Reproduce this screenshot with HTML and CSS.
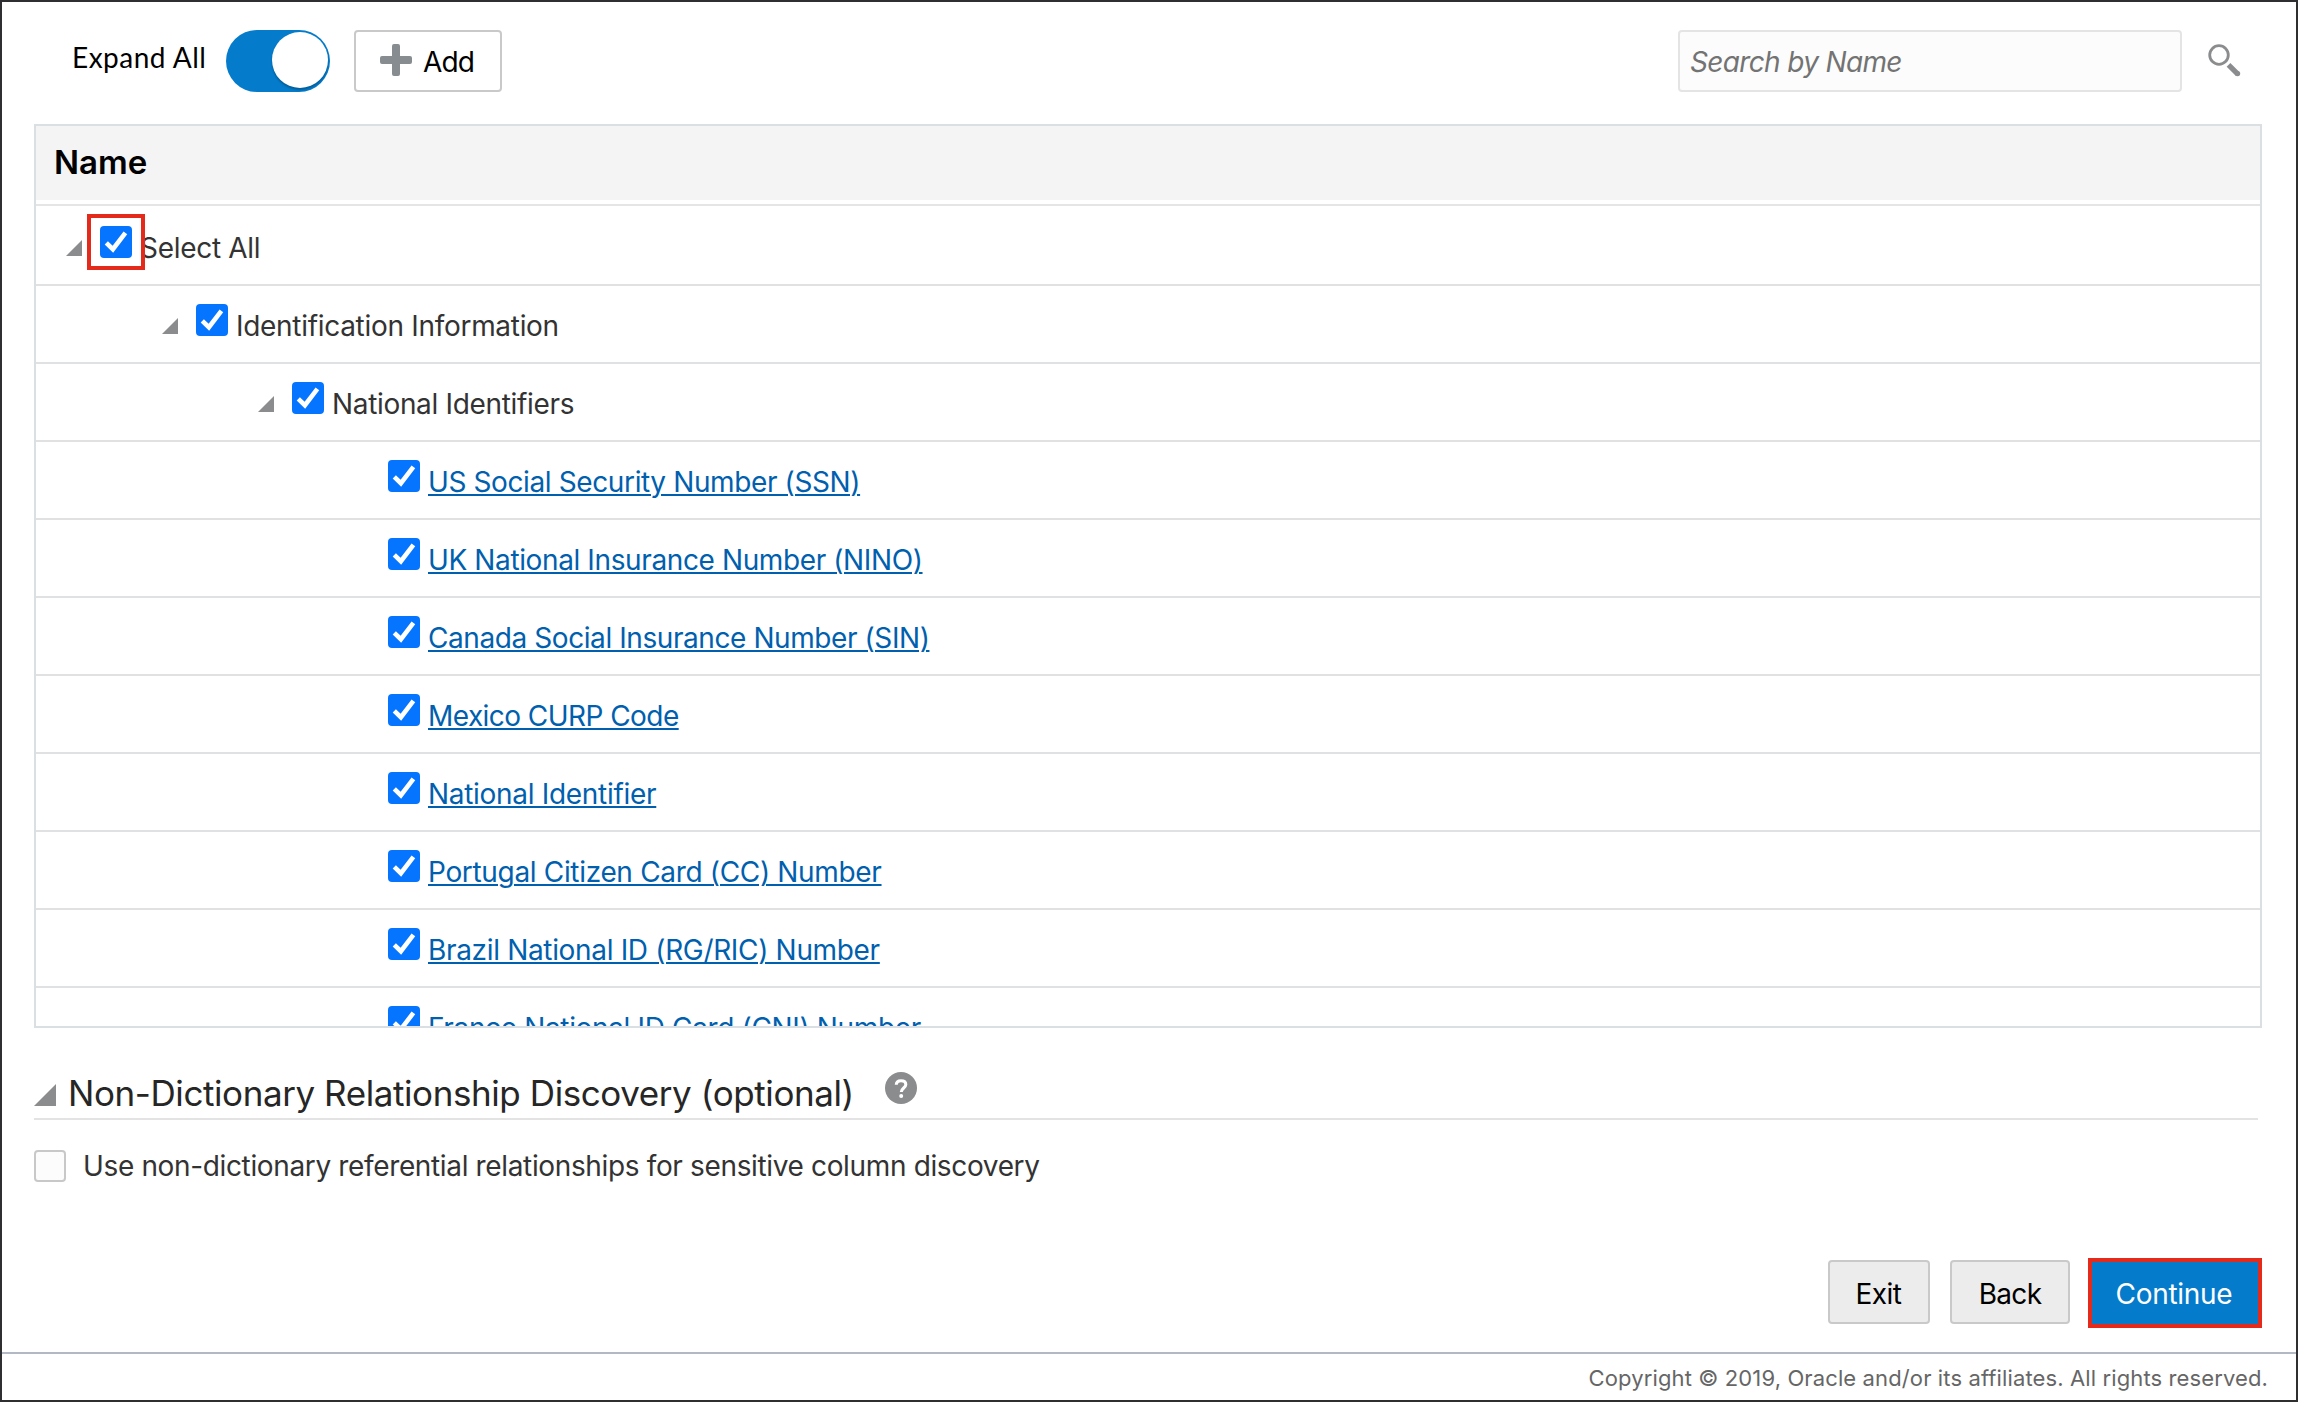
FILE: index.html
```
<!DOCTYPE html>
<html lang="en">
<head>
<meta charset="utf-8">
<title>Sensitive Categories</title>
<link rel="stylesheet" href="styles.css">
</head>
<body>
<svg width="0" height="0" class="defs" aria-hidden="true">
  <symbol id="tick" viewBox="0 0 32 32"><path d="M6.3 16.8 12.9 23.2 25.4 6.9" fill="none" stroke="#fff" stroke-width="4.6"/></symbol>
  <symbol id="open" viewBox="0 0 16 16"><path d="M0 16 16 0V16Z" fill="#8b8c8e"/></symbol>
</svg>
<div class="page">
  <header class="toolbar">
    <span class="expand-label">Expand All</span>
    <span class="toggle"><span class="knob"></span></span>
    <button class="btn add">
      <svg class="plus" viewBox="0 0 32 32"><path d="M14 0h4a2 2 0 0 1 2 2v10h10a2 2 0 0 1 2 2v4a2 2 0 0 1-2 2H20v10a2 2 0 0 1-2 2h-4a2 2 0 0 1-2-2V20H2a2 2 0 0 1-2-2v-4a2 2 0 0 1 2-2h10V2a2 2 0 0 1 2-2Z" fill="#878c90"/></svg>
      <span>Add</span>
    </button>
    <div class="search">Search by Name</div>
    <svg class="lens" viewBox="0 0 34 34"><circle cx="11" cy="11" r="9.3" fill="none" stroke="#8b8c8e" stroke-width="2.8"/><path d="M20.5 20.8 29.8 30.1" stroke="#8b8c8e" stroke-width="5.2"/><circle cx="29.6" cy="29.6" r="2.6" fill="#8b8c8e"/></svg>
  </header>

  <section class="tree">
    <h2 class="tree-head">Name</h2>
    <div class="row root"><svg class="arrow"><use href="#open"/></svg><span class="check marked"><svg><use href="#tick"/></svg></span><span class="text t0">Select All</span></div>
    <div class="row l1"><svg class="arrow"><use href="#open"/></svg><span class="check"><svg><use href="#tick"/></svg></span><span class="text t1">Identification Information</span></div>
    <div class="row l2"><svg class="arrow"><use href="#open"/></svg><span class="check"><svg><use href="#tick"/></svg></span><span class="text t2">National Identifiers</span></div>
    <div class="row leaf"><span class="check"><svg><use href="#tick"/></svg></span><a class="text link t4">US Social Security Number (SSN)</a></div>
    <div class="row leaf"><span class="check"><svg><use href="#tick"/></svg></span><a class="text link t4">UK National Insurance Number (NINO)</a></div>
    <div class="row leaf"><span class="check"><svg><use href="#tick"/></svg></span><a class="text link t5">Canada Social Insurance Number (SIN)</a></div>
    <div class="row leaf"><span class="check"><svg><use href="#tick"/></svg></span><a class="text link t6">Mexico CURP Code</a></div>
    <div class="row leaf"><span class="check"><svg><use href="#tick"/></svg></span><a class="text link t1">National Identifier</a></div>
    <div class="row leaf"><span class="check"><svg><use href="#tick"/></svg></span><a class="text link t2">Portugal Citizen Card (CC) Number</a></div>
    <div class="row leaf"><span class="check"><svg><use href="#tick"/></svg></span><a class="text link t2">Brazil National ID (RG/RIC) Number</a></div>
    <div class="row leaf"><span class="check"><svg><use href="#tick"/></svg></span><a class="text link">France National ID Card (CNI) Number</a></div>
  </section>

  <section class="discovery">
    <div class="heading">
      <svg class="big-arrow" viewBox="0 0 16 16" preserveAspectRatio="none"><path d="M0 16 16 0V16Z" fill="#8b8c8e"/></svg>
      <h3>Non-Dictionary Relationship Discovery (optional)</h3>
      <svg class="help" viewBox="0 0 32 32"><circle cx="16" cy="16" r="16" fill="#8b8c8e"/><path d="M11.3 12.8C11.3 9.9 13.2 8.7 16 8.7s4.8 1.4 4.8 3.9c0 3.4-4.5 3.4-4.5 7.4" fill="none" stroke="#fff" stroke-width="3.1"/><circle cx="16.2" cy="23.9" r="2" fill="#fff"/></svg>
    </div>
    <label class="option"><span class="box"></span><span class="text">Use non-dictionary referential relationships for sensitive column discovery</span></label>
  </section>

  <div class="actions">
    <button class="btn exit">Exit</button>
    <button class="btn back">Back</button>
    <button class="continue">Continue</button>
  </div>
  <footer class="footer">Copyright © 2019, Oracle and/or its affiliates. All rights reserved.</footer>
</div>
</body>
</html>
```
FILE: styles.css
```
* { box-sizing: border-box; }
body { margin: 0; background: #fff; }
.defs { position: absolute; }
.page {
  width: 2298px; height: 1402px; border: 2px solid #2f2f31;
  display: flex; flex-direction: column; background: #fff;
  font-family: Inter, "Liberation Sans", sans-serif; font-size: 28px; color: #333;
}
button { font: inherit; margin: 0; padding: 0; color: #000; }

.toolbar { display: flex; height: 62px; margin: 28px 54px 32px 70px; flex: none; }
.expand-label {
  width: 154px; line-height: 54px; letter-spacing: .5px; color: #000;
  font-family: Lato, sans-serif; white-space: nowrap;
}
.toggle {
  width: 104px; height: 62px; border-radius: 31px; background: #047bcb;
  padding: 2px; display: flex; justify-content: flex-end;
}
.knob { width: 56px; height: 56px; border-radius: 50%; background: #fff; box-shadow: 0 2px 2px rgba(0, 0, 0, .25); }
.btn { border: 2px solid #c9c9c9; border-radius: 4px; background: #fff; }
.add {
  width: 148px; margin-left: 24px; padding: 0 0 0 24px; display: flex;
  letter-spacing: -.9px; line-height: 60px;
}
.plus { width: 32px; height: 32px; margin: 12px 11px 0 0; }
.search {
  width: 504px; margin-left: auto; padding-left: 10px; border: 2px solid #e4e4e4; border-radius: 4px;
  background: #fcfcfc; color: #737373; font-style: italic; line-height: 60px; letter-spacing: -.65px;
}
.lens { width: 34px; height: 34px; margin: 14px 0 0 26px; }

.tree {
  width: 2228px; height: 904px; margin-left: 32px; flex: none;
  border: 2px solid #d9dfe3; overflow: hidden;
}
.tree-head {
  margin: 0 0 4px; height: 74px; padding-left: 18px; background: #f4f4f4;
  font-size: 33px; font-weight: 600; line-height: 72px; color: #000;
}
.row { display: flex; align-items: flex-start; height: 78px; border-bottom: 2px solid #dfe1e2; padding-top: 18px; }
.root { height: 82px; border-top: 2px solid #e5e5e5; padding: 20px 0 0 30px; }
.l1 { padding-left: 126px; }
.l2 { padding-left: 222px; }
.leaf { padding-left: 352px; }
.arrow { width: 16px; height: 16px; margin: 14px 18px 0 0; }
.check { position: relative; width: 32px; height: 32px; margin-right: 8px; border-radius: 4px; background: #0575ff; }
.check svg { display: block; width: 32px; height: 32px; }
.marked::after { content: ""; position: absolute; inset: -12px -13px; border: 4px solid #e32a1b; }
.text { margin-top: 2px; line-height: 40px; letter-spacing: -.355px; white-space: nowrap; }
.link { color: #005fae; text-decoration: underline 2px; text-underline-offset: 2px; }
.t0 { letter-spacing: -.3px; }
.t1 { letter-spacing: -.3px; }
.t2 { letter-spacing: -.33px; }
.t4 { letter-spacing: -.385px; }
.t5 { letter-spacing: -.42px; }
.t6 { letter-spacing: -.55px; }

.discovery { width: 2224px; margin: 45px 0 0 32px; }
.heading { display: flex; height: 47px; border-bottom: 2px solid #e3e3e3; }
.big-arrow { width: 22px; height: 22px; margin-top: 11px; }
h3 { margin: 0 34px 0 12px; font-size: 35px; font-weight: 400; line-height: 40px; letter-spacing: -.415px; color: #262626; white-space: nowrap; width: 783px; }
.help { width: 32px; height: 32px; margin-top: -1px; }
.option { display: flex; margin-top: 26px; }
.option .text { margin: 0; }
.box { width: 32px; height: 32px; margin: 4px 17px 0 0; border: 2px solid #c8c8c8; border-radius: 4px; background: #fcfcfc; }

.actions { display: flex; align-items: flex-start; justify-content: flex-end; margin: auto 34px 24px 0; }
.actions .btn { height: 64px; margin-top: 2px; padding-top: 4px; line-height: 56px; background: #ececec; }
.actions .exit { width: 102px; margin-right: 20px; padding-right: 1px; letter-spacing: -.5px; }
.back { width: 120px; margin-right: 18px; letter-spacing: -.7px; }
.continue {
  width: 174px; height: 70px; padding: 4px 2px 2px 0; line-height: 56px; letter-spacing: -.3px;
  border: 4px solid #e32a1b; background: #047bcb; color: #fff;
}
.footer {
  height: 48px; flex: none; padding-right: 28px; border-top: 2px solid #b3b9c4;
  font-size: 22px; line-height: 48px; letter-spacing: .12px; text-align: right; color: #666;
}
```
